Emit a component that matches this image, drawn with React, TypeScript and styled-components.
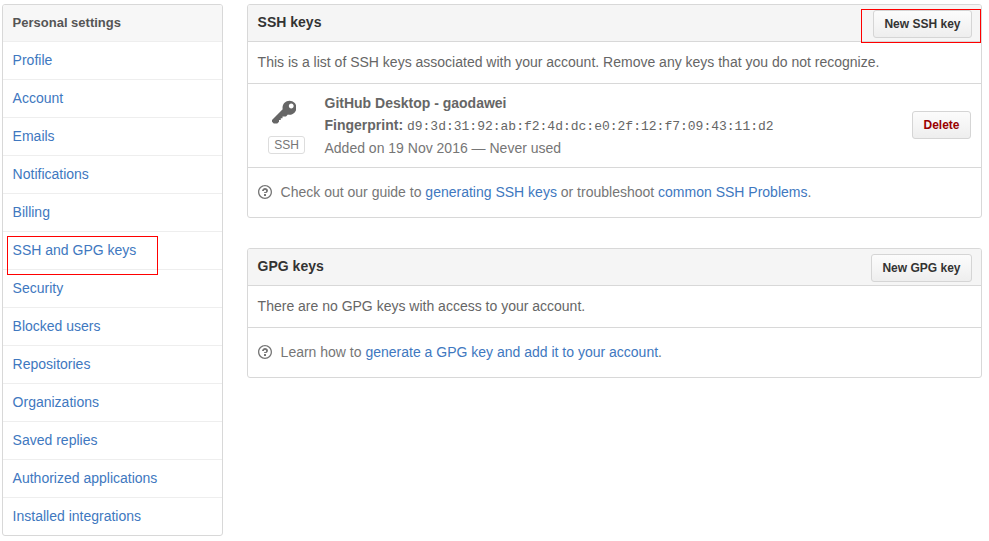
import React from "react";
import styled, { createGlobalStyle, css } from "styled-components";

const GlobalStyle = createGlobalStyle`
  *, *::before, *::after { box-sizing: border-box; }
  body {
    margin: 0;
    background: #fff;
    color: #333;
    font: 14px/21px "Liberation Sans", Arial, sans-serif;
  }
`;

const Page = styled.div`
  display: flex;
  align-items: flex-start;
  gap: 24px;
  padding: 4px 7px 0 2px;
`;

const Menu = styled.nav`
  flex: 0 0 221px;
  border: 1px solid #d8d8d8;
  border-radius: 3px;
  overflow: hidden;
`;

const MenuHeading = styled.h3`
  margin: 0;
  height: 37px;
  padding: 0 9.6px 1px;
  border-bottom: 1px solid #eee;
  background: #f7f7f7;
  color: #555;
  font-size: 13px;
  line-height: 35px;
`;

const MenuItem = styled.a`
  position: relative;
  display: block;
  height: 38px;
  padding: 0 9.6px;
  border-bottom: 1px solid #eee;
  color: #4078c0;
  line-height: 37px;
  text-decoration: none;

  &:last-child {
    height: 37px;
    border-bottom: 0;
  }
`;

const Highlight = styled.span<{ $top: number; $left: number; $width: number; $height: number }>`
  position: absolute;
  top: ${(p) => p.$top}px;
  left: ${(p) => p.$left}px;
  z-index: 1;
  width: ${(p) => p.$width}px;
  height: ${(p) => p.$height}px;
  border: 1px solid #f00;
  pointer-events: none;
`;

const Content = styled.main`
  flex: 1;
  display: flex;
  flex-direction: column;
  gap: 30px;
`;

const Box = styled.section`
  border: 1px solid #d8d8d8;
  border-radius: 3px;
`;

const BoxHeader = styled.header`
  position: relative;
  display: flex;
  align-items: flex-start;
  justify-content: space-between;
  height: 37px;
  padding: 5px 9px 0 9.6px;
  border-bottom: 1px solid #d8d8d8;
  border-radius: 2px 2px 0 0;
  background: #f5f5f5;
`;

const BoxTitle = styled.h3`
  margin: 2px 0 0;
  color: #333;
  font-size: 14px;
  line-height: 21px;
`;

const Button = styled.button<{ $danger?: boolean }>`
  height: 28px;
  padding: 0 10.5px;
  border: 1px solid #d5d5d5;
  border-radius: 3px;
  background: linear-gradient(#fcfcfc, #eee);
  color: #333;
  font: bold 12px/20px "Liberation Sans", Arial, sans-serif;
  white-space: nowrap;
  ${(p) =>
    p.$danger &&
    css`
      margin-bottom: 1px;
      color: #900;
    `}
`;

const Description = styled.p`
  margin: 0;
  height: 42px;
  padding: 0 9.6px;
  border-bottom: 1px solid #d8d8d8;
  color: #666;
  line-height: 41px;
`;

const KeyRow = styled.div`
  display: flex;
  align-items: center;
  height: 84px;
  padding: 0 10px 0 20px;
  border-bottom: 1px solid #d8d8d8;
`;

const KeyKind = styled.div`
  display: flex;
  flex-direction: column;
  align-items: center;
  width: 37px;
  height: 56px;
  margin-top: 3px;
  color: #666;

  svg {
    margin: 0 0 9px -5px;
  }
`;

const Badge = styled.span`
  width: 37px;
  height: 18px;
  border: 1px solid #ddd;
  border-radius: 3px;
  color: #767676;
  font-size: 12px;
  line-height: 16px;
  text-align: center;
`;

const KeyDetails = styled.div`
  flex: 1;
  padding-left: 19.5px;
  color: #767676;
  line-height: 22.4px;

  strong {
    color: #666;
  }

  code {
    color: #666;
    font: 13px/1 "Liberation Mono", monospace;
  }
`;

const Help = styled.p`
  display: flex;
  align-items: flex-start;
  gap: 8.6px;
  margin: 0;
  height: 49px;
  padding: 14px 10px 0;
  color: #767676;

  svg {
    margin-top: 2px;
  }

  a {
    color: #4078c0;
    text-decoration: none;
  }
`;

const KeyIcon = () => (
  <svg width="24.5" height="28" viewBox="0 0 14 16" fill="currentColor" aria-hidden="true">
    <path
      fillRule="evenodd"
      d="M12.83 2.17C12.08 1.42 11.14 1.03 10 1c-1.13.03-2.08.42-2.83 1.17S6.04 3.86 6.01 5c0 .3.03.59.09.89L0 12v1l1 1h2l1-1v-1h1v-1h1v-1h2l1.09-1.11c.3.08.59.11.91.11 1.14-.03 2.08-.42 2.83-1.17S13.97 6.14 14 5c-.03-1.14-.42-2.08-1.17-2.83zM11 5.38c-.77 0-1.38-.61-1.38-1.38 0-.77.61-1.38 1.38-1.38.77 0 1.38.61 1.38 1.38 0 .77-.61 1.38-1.38 1.38z"
    />
  </svg>
);

const QuestionIcon = () => (
  <svg width="14" height="16" viewBox="0 0 14 16" fill="currentColor" aria-hidden="true">
    <path
      fillRule="evenodd"
      d="M6 10h2v2H6v-2zm4-3.5C10 8.64 8 9 8 9H6c0-.55.45-1 1-1h.5c.28 0 .5-.22.5-.5v-1c0-.28-.22-.5-.5-.5h-1c-.28 0-.5.22-.5.5V7H4c0-1.5 1.5-3 3-3s3 1 3 2.5zM7 2.3c3.14 0 5.7 2.56 5.7 5.7s-2.56 5.7-5.7 5.7A5.71 5.71 0 0 1 1.3 8c0-3.14 2.56-5.7 5.7-5.7zM7 1C3.14 1 0 4.14 0 8s3.14 7 7 7 7-3.14 7-7-3.14-7-7-7z"
    />
  </svg>
);

const SELECTED = "SSH and GPG keys";
const MENU = [
  "Profile",
  "Account",
  "Emails",
  "Notifications",
  "Billing",
  SELECTED,
  "Security",
  "Blocked users",
  "Repositories",
  "Organizations",
  "Saved replies",
  "Authorized applications",
  "Installed integrations",
];

export default function App() {
  return (
    <>
      <GlobalStyle />
      <Page>
        <Menu>
          <MenuHeading>Personal settings</MenuHeading>
          {MENU.map((label) => (
            <MenuItem key={label} href="#">
              {label}
              {label === SELECTED && <Highlight $top={4} $left={4} $width={151} $height={39} />}
            </MenuItem>
          ))}
        </Menu>
        <Content>
          <Box>
            <BoxHeader>
              <BoxTitle>SSH keys</BoxTitle>
              <Button>New SSH key</Button>
              <Highlight $top={4} $left={613} $width={120} $height={34} />
            </BoxHeader>
            <Description>
              This is a list of SSH keys associated with your account. Remove any keys that you do not recognize.
            </Description>
            <KeyRow>
              <KeyKind>
                <KeyIcon />
                <Badge>SSH</Badge>
              </KeyKind>
              <KeyDetails>
                <strong>GitHub Desktop - gaodawei</strong>
                <br />
                <strong>Fingerprint:</strong> <code>d9:3d:31:92:ab:f2:4d:dc:e0:2f:12:f7:09:43:11:d2</code>
                <br />
                Added on 19 Nov 2016 — Never used
              </KeyDetails>
              <Button $danger>Delete</Button>
            </KeyRow>
            <Help>
              <QuestionIcon />
              <span>
                Check out our guide to <a href="#">generating SSH keys</a> or troubleshoot{" "}
                <a href="#">common SSH Problems</a>.
              </span>
            </Help>
          </Box>
          <Box>
            <BoxHeader>
              <BoxTitle>GPG keys</BoxTitle>
              <Button>New GPG key</Button>
            </BoxHeader>
            <Description>There are no GPG keys with access to your account.</Description>
            <Help>
              <QuestionIcon />
              <span>
                Learn how to <a href="#">generate a GPG key and add it to your account</a>.
              </span>
            </Help>
          </Box>
        </Content>
      </Page>
    </>
  );
}
